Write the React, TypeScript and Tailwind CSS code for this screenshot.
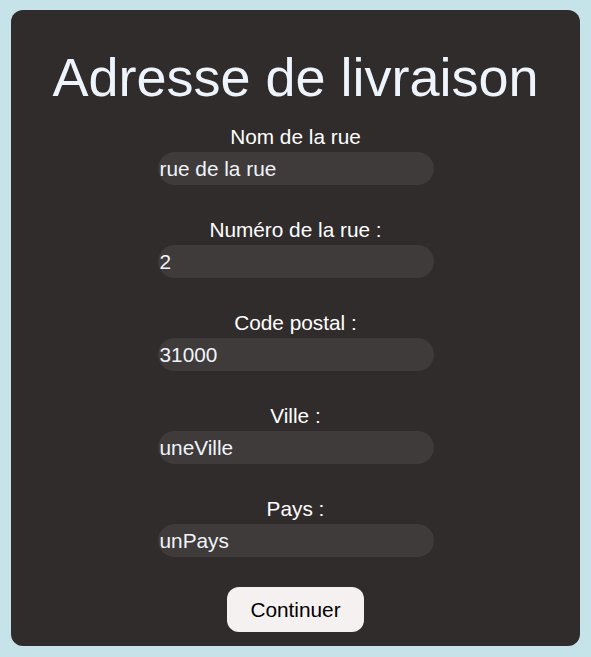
import React, { useState } from 'react';

type Field = { label: string; name: string; value: string };

const initialFields: Field[] = [
  { label: 'Nom de la rue', name: 'rue', value: 'rue de la rue' },
  { label: 'Numéro de la rue :', name: 'numero', value: '2' },
  { label: 'Code postal :', name: 'cp', value: '31000' },
  { label: 'Ville :', name: 'ville', value: 'uneVille' },
  { label: 'Pays :', name: 'pays', value: 'unPays' },
];

const App: React.FC = () => {
  const [fields, setFields] = useState<Field[]>(initialFields);

  const update = (name: string, value: string) => {
    setFields(prev => prev.map(f => (f.name === name ? { ...f, value } : f)));
  };

  return (
    <div
      className="min-h-screen bg-[#c5e3e9] pt-[10px] pb-[11px] px-[11px]"
      style={{ fontFamily: '"Liberation Sans", Arial, sans-serif' }}
    >
      <div className="h-[636px] bg-[#302c2b] rounded-xl flex flex-col items-center pt-[36px]">
        <h1 className="text-[54px] leading-[62px] text-[#eef4fc] font-normal">Adresse de livraison</h1>

        <form className="flex flex-col items-center mt-[17px]" onSubmit={e => e.preventDefault()}>
          <div className="flex flex-col items-center gap-[33px]">
            {fields.map(f => (
              <div key={f.name} className="flex flex-col items-center">
                <label htmlFor={f.name} className="text-[20.8px] leading-[24px] text-white">
                  {f.label}
                </label>
                <input
                  id={f.name}
                  value={f.value}
                  onChange={e => update(f.name, e.target.value)}
                  className="mt-[3px] w-[276px] h-[33px] rounded-full bg-[#3f3b3a] pl-[2px] text-[20.8px] text-[#f0f4fa] outline-none"
                />
              </div>
            ))}
          </div>

          <button
            type="submit"
            className="mt-[30px] h-[45px] px-[23px] rounded-xl bg-[#f5f1f0] text-[20.8px] text-black"
          >
            Continuer
          </button>
        </form>
      </div>
    </div>
  );
};

export default App;
